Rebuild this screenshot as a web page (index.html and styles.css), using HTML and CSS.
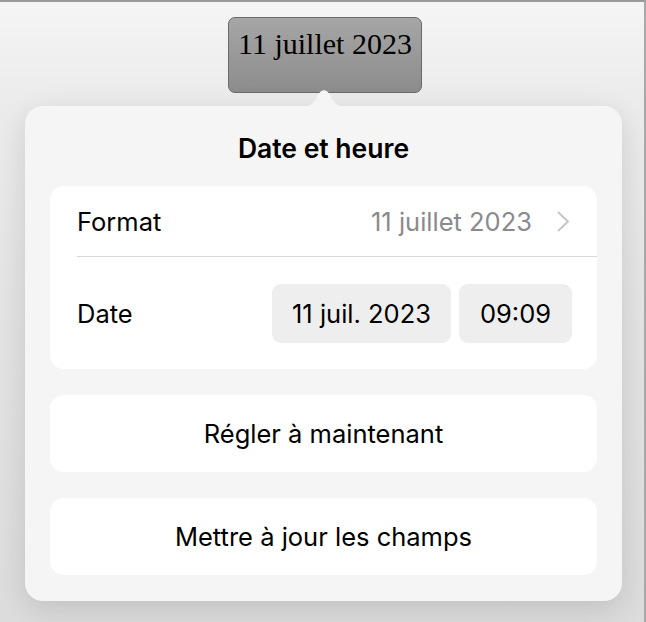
FILE: index.html
```html
<!DOCTYPE html>
<html lang="fr">
<head>
<meta charset="utf-8">
<link rel="stylesheet" href="styles.css">
</head>
<body>
<div class="frame">
  <div class="tag">11 juillet 2023</div>
  <div class="popover">
    <svg class="arrow" width="50" height="22" viewBox="0 0 50 22">
      <path d="M0 22 C10 22 14 20 19 10 C22 3.5 28 3.5 31 10 C36 20 40 22 50 22 Z" fill="#f5f5f5"/>
    </svg>
    <div class="title">Date et heure</div>
    <div class="card">
      <div class="row row-format">
        <span class="label">Format</span>
        <span class="value">11 juillet 2023</span>
        <svg class="chev" width="13" height="21" viewBox="0 0 13 21"><path d="M1.5 1.5 L11 10.5 L1.5 19.5" fill="none" stroke="#c4c4c7" stroke-width="1.8" stroke-linecap="round" stroke-linejoin="round"/></svg>
      </div>
      <div class="divider"></div>
      <div class="row row-date">
        <span class="label">Date</span>
        <span class="pill pill-date">11 juil. 2023</span>
        <span class="pill pill-time">09:09</span>
      </div>
    </div>
    <div class="button">Régler à maintenant</div>
    <div class="button">Mettre à jour les champs</div>
  </div>
</div>
</body>
</html>
```

FILE: styles.css
```css
html, body {
  margin: 0;
  padding: 0;
}
body {
  font-family: "Inter", "Roboto", "Liberation Sans", sans-serif;
  color: #000;
}
.frame {
  width: 646px;
  height: 622px;
  box-sizing: border-box;
  border-top: 2px solid #9a9a9a;
  border-right: 2px solid #a8a8a8;
  background: linear-gradient(to bottom, #f5f5f5 0px, #ececec 90px, #e4e4e4 300px, #dcdcdc 622px);
  display: flex;
  flex-direction: column;
  overflow: hidden;
}
.tag {
  margin-top: 15px;
  margin-left: 228px;
  width: 194px;
  height: 76px;
  box-sizing: border-box;
  border: 1px solid #6a6a6a;
  border-radius: 7px;
  background: linear-gradient(to bottom, #a6a6a6, #8c8c8c);
  font-family: "Liberation Serif", "DejaVu Serif", serif;
  font-size: 30px;
  text-align: center;
  padding-top: 8px;
  line-height: 36px;
  white-space: nowrap;
}
.popover {
  position: relative;
  margin: 13px 0 0 25px;
  width: 597px;
  box-sizing: border-box;
  background: #f5f5f5;
  border-radius: 18px;
  padding: 28px 25px 26px;
  box-shadow: 0 8px 30px rgba(0,0,0,0.13);
  display: flex;
  flex-direction: column;
}
.arrow {
  position: absolute;
  top: -21px;
  left: 274px;
}
.title {
  text-align: center;
  font-size: 26.5px;
  font-weight: 600;
  line-height: 28px;
  margin-bottom: 24px;
}
.card {
  background: #fff;
  border-radius: 14px;
  display: flex;
  flex-direction: column;
}
.row {
  display: flex;
  align-items: center;
  padding-left: 27px;
  font-size: 25.5px;
}
.row-format {
  height: 70px;
  padding-right: 27px;
}
.label {
  flex: 1;
}
.value {
  color: #8a8a8e;
  margin-right: 25px;
}
.divider {
  height: 1px;
  background: #d8d8da;
  margin-left: 27px;
}
.row-date {
  height: 112px;
  padding-right: 25px;
  gap: 8px;
}
.pill {
  height: 59px;
  background: #eeeeef;
  border-radius: 9px;
  display: flex;
  align-items: center;
  justify-content: center;
}
.pill-date {
  width: 179px;
}
.pill-time {
  width: 113px;
}
.button {
  margin-top: 26px;
  height: 77px;
  background: #fff;
  border-radius: 14px;
  display: flex;
  align-items: center;
  justify-content: center;
  font-size: 25.5px;
}
```
